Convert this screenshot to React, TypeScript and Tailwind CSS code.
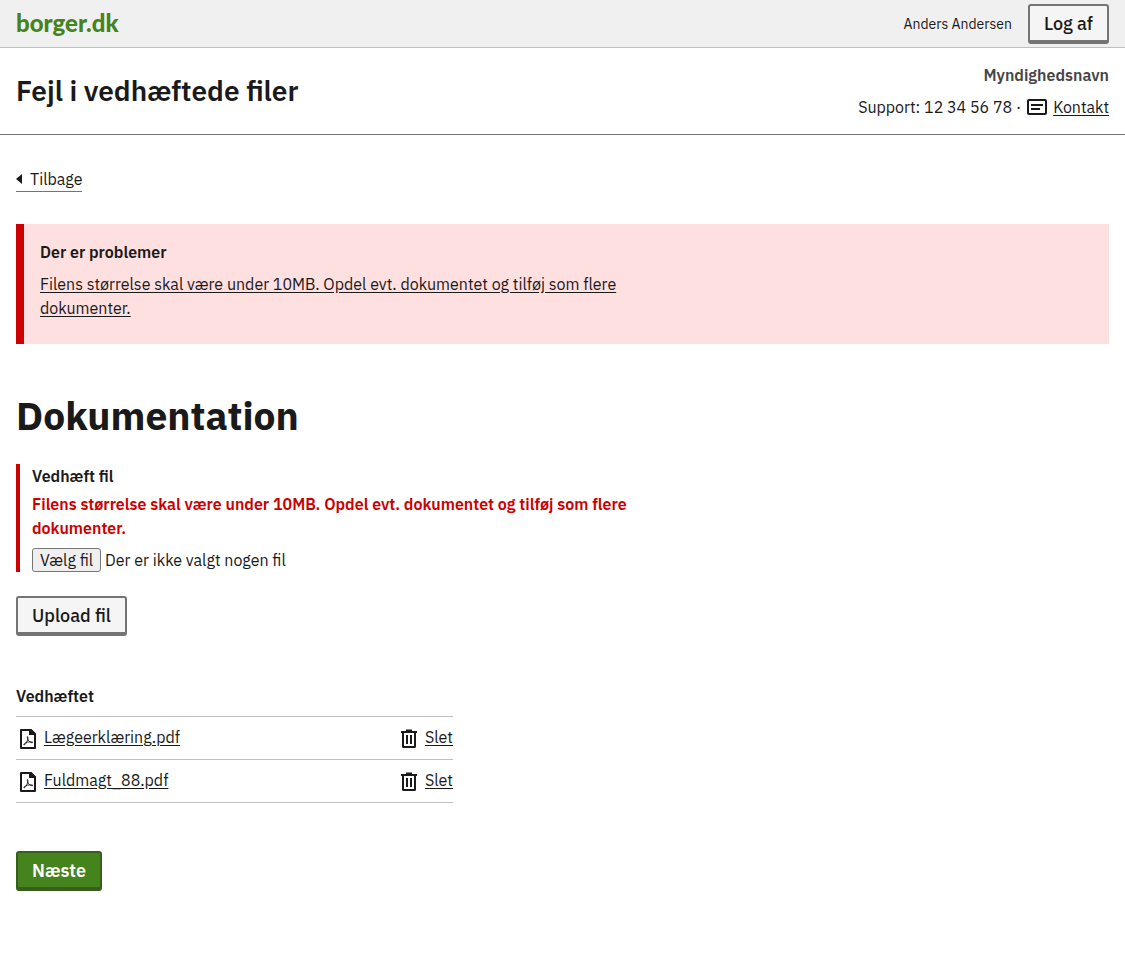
import type { ReactNode } from "react";

const files = ["Lægeerklæring.pdf", "Fuldmagt_88.pdf"];
const fileError =
  "Filens størrelse skal være under 10MB. Opdel evt. dokumentet og tilføj som flere dokumenter.";

function MessageIcon() {
  return (
    <svg className="size-6 shrink-0" viewBox="0 0 24 24" fill="none" stroke="currentColor" strokeWidth="2" aria-hidden="true">
      <rect x="3" y="5" width="18" height="14" rx="1" />
      <path d="M6 10h12M6 14h9" />
    </svg>
  );
}

function PdfIcon() {
  return (
    <svg className="size-6 shrink-0" viewBox="0 0 24 24" fill="none" stroke="currentColor" aria-hidden="true">
      <path d="M5 3h10l4 4v14H5z" strokeWidth="2" strokeLinejoin="round" />
      <path d="M13 2h2l5 5v1h-7z" fill="currentColor" stroke="none" />
      <path d="M11.300 9.500c.9 0 .7 2 .2 3.500-.8 2.500-2.300 5-3.500 4.800-1-.4 1-2 3.400-2.600 2.300-.6 5.600-.5 5.400.3-.3.700-3.200 0-4.500-2.300-.7-1.400-1.400-3.500-1-3.700z" strokeWidth="0.900" />
    </svg>
  );
}

function TrashIcon() {
  return (
    <svg className="size-6 shrink-0" viewBox="0 0 24 24" fill="none" stroke="currentColor" strokeWidth="2" aria-hidden="true">
      <path d="M4 5h16M6 5v14.500q0 .5.500.5h11q.5 0 .5-.5V5M10 8v9M14 8v9" />
      <path d="M9 3.500h6" />
    </svg>
  );
}

function SecondaryButton({ children }: { children: ReactNode }) {
  return (
    <button
      type="button"
      className="h-10 rounded-[3px] border-2 border-b-4 border-[#747474] bg-[#f5f5f5] px-[14px] pt-0.5 text-lg leading-6 font-medium"
    >
      {children}
    </button>
  );
}

export default function App() {
  return (
    <div className="bg-white font-['IBM_Plex_Sans','Open_Sans',sans-serif] text-base text-[#1a1a1a]">
      <header>
        <div className="flex h-12 items-center justify-between border-b border-[#bfbfbf] bg-[#f0f0f0] px-4">
          <a href="#" className="pb-0.5 font-['Lato',sans-serif] text-2xl leading-7 font-black text-[#45831d]">
            borger.dk
          </a>
          <div className="flex items-center gap-4">
            <span className="text-sm">Anders Andersen</span>
            <SecondaryButton>Log af</SecondaryButton>
          </div>
        </div>
        <div className="flex items-center justify-between border-b border-[#747474] px-4 py-[15px]">
          <p className="text-[28px] leading-9 font-semibold">Fejl i vedhæftede filer</p>
          <div className="flex flex-col items-end gap-2">
            <p className="font-semibold text-[#454545]">Myndighedsnavn</p>
            <p className="flex items-center gap-1">
              <span>Support: 12 34 56 78 ·</span>
              <MessageIcon />
              <a href="#" className="underline underline-offset-2">Kontakt</a>
            </p>
          </div>
        </div>
      </header>

      <main className="px-4 pt-8 pb-16">
        <nav className="flex">
          <a href="#" className="flex h-[25px] items-center gap-2 border-b border-[#747474]">
            <svg className="h-[10px] w-[6px]" viewBox="0 0 6 10" fill="currentColor" aria-hidden="true">
              <path d="M6 0v10L0 5z" />
            </svg>
            Tilbage
          </a>
        </nav>

        <section role="alert" className="mt-8 border-l-8 border-[#cc0000] bg-[#ffe0e0] px-4 pt-4 pb-6">
          <h2 className="font-semibold">Der er problemer</h2>
          <a href="#attachment" className="mt-2 block max-w-[608px] underline underline-offset-2">
            {fileError}
          </a>
        </section>

        <h1 className="mt-12 text-[39px] leading-[48px] font-bold">Dokumentation</h1>

        <form>
          <div className="mt-6 border-l-4 border-[#cc0000] pl-3">
            <label htmlFor="attachment" className="block font-semibold">Vedhæft fil</label>
            <p className="mt-1 max-w-[608px] font-semibold text-[#cc0000]">{fileError}</p>
            <div className="relative mt-2 flex items-center gap-1">
              <input id="attachment" type="file" className="sr-only" />
              <label
                htmlFor="attachment"
                className="h-6 rounded-[3px] border border-[#767676] bg-[#efefef] px-[7px] leading-[22px]"
              >
                Vælg fil
              </label>
              <span>Der er ikke valgt nogen fil</span>
            </div>
          </div>
          <div className="mt-6">
            <SecondaryButton>Upload fil</SecondaryButton>
          </div>

          <h2 className="mt-12 font-semibold">Vedhæftet</h2>
          <ul className="mt-2 max-w-[437px] border-t border-[#bfbfbf]">
            {files.map((name) => (
              <li key={name} className="flex justify-between border-b border-[#bfbfbf] py-2">
                <a href="#" className="flex items-end gap-1 underline underline-offset-2">
                  <PdfIcon />
                  <span className="pb-0.5">{name}</span>
                </a>
                <a href="#" className="flex items-end gap-1 underline underline-offset-2">
                  <TrashIcon />
                  <span className="pb-0.5">Slet</span>
                </a>
              </li>
            ))}
          </ul>

          <button
            type="button"
            className="mt-12 h-10 rounded-[3px] border-2 border-b-4 border-[#375e1d] bg-[#45831d] px-[14px] pt-0.5 text-lg leading-6 font-semibold text-white"
          >
            Næste
          </button>
        </form>
      </main>
    </div>
  );
}
